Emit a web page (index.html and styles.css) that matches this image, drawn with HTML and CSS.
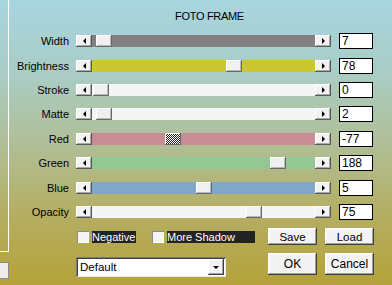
FILE: index.html
```html
<!DOCTYPE html>
<html>
<head>
  <title>Foto Frame</title>
  <link rel="stylesheet" href="styles.css">
</head>
<body>
  <div class="window">
    <div class="side">
      <div class="side-panel"></div>
      <div class="side-button"></div>
    </div>

    <div class="main">
      <h1 class="title">FOTO FRAME</h1>

      <div class="sliders">
        <span class="label">Width</span>
        <div class="slider">
          <span class="arrow"><i class="tri-left"></i></span>
          <span class="track track-gray"><span class="thumb" style="left: 4px"></span></span>
          <span class="arrow"><i class="tri-right"></i></span>
        </div>
        <span class="value">7</span>

        <span class="label">Brightness</span>
        <div class="slider">
          <span class="arrow"><i class="tri-left"></i></span>
          <span class="track track-yellow"><span class="thumb" style="left: 134px"></span></span>
          <span class="arrow"><i class="tri-right"></i></span>
        </div>
        <span class="value">78</span>

        <span class="label">Stroke</span>
        <div class="slider">
          <span class="arrow"><i class="tri-left"></i></span>
          <span class="track track-white"><span class="thumb" style="left: 1px"></span></span>
          <span class="arrow"><i class="tri-right"></i></span>
        </div>
        <span class="value">0</span>

        <span class="label">Matte</span>
        <div class="slider">
          <span class="arrow"><i class="tri-left"></i></span>
          <span class="track track-white"><span class="thumb" style="left: 4px"></span></span>
          <span class="arrow"><i class="tri-right"></i></span>
        </div>
        <span class="value">2</span>

        <span class="label">Red</span>
        <div class="slider">
          <span class="arrow"><i class="tri-left"></i></span>
          <span class="track track-red"><span class="thumb thumb-focus" style="left: 73px"></span></span>
          <span class="arrow"><i class="tri-right"></i></span>
        </div>
        <span class="value">-77</span>

        <span class="label">Green</span>
        <div class="slider">
          <span class="arrow"><i class="tri-left"></i></span>
          <span class="track track-green"><span class="thumb" style="left: 178px"></span></span>
          <span class="arrow"><i class="tri-right"></i></span>
        </div>
        <span class="value">188</span>

        <span class="label">Blue</span>
        <div class="slider">
          <span class="arrow"><i class="tri-left"></i></span>
          <span class="track track-blue"><span class="thumb" style="left: 104px"></span></span>
          <span class="arrow"><i class="tri-right"></i></span>
        </div>
        <span class="value">5</span>

        <span class="label">Opacity</span>
        <div class="slider">
          <span class="arrow"><i class="tri-left"></i></span>
          <span class="track track-white"><span class="thumb" style="left: 154px"></span></span>
          <span class="arrow"><i class="tri-right"></i></span>
        </div>
        <span class="value">75</span>
      </div>

      <div class="bottom">
        <div class="bottom-left">
          <div class="checks">
            <span class="check"></span>
            <span class="check-label negative">Negative</span>
            <span class="check"></span>
            <span class="check-label shadow">More Shadow</span>
          </div>
          <div class="select">
            <span class="select-text">Default</span>
            <span class="select-btn"><i class="tri-down"></i></span>
          </div>
        </div>
        <div class="bottom-right">
          <div class="btn-row">
            <button class="btn btn-small">Save</button>
            <button class="btn btn-small">Load</button>
          </div>
          <div class="btn-row">
            <button class="btn btn-big">OK</button>
            <button class="btn btn-big">Cancel</button>
          </div>
        </div>
      </div>
    </div>
  </div>
</body>
</html>
```

FILE: styles.css
```css
body {
  margin: 0;
  font-family: "Liberation Sans", Arial, sans-serif;
}

.window {
  width: 392px;
  height: 285px;
  display: flex;
  overflow: hidden;
  background: linear-gradient(to bottom, #a7d5e0 0%, #a9cdc6 25%, #b0bf98 50%, #b4ae62 75%, #b5a23a 100%);
}

.side {
  width: 9px;
  flex: none;
}

.side-panel {
  height: 252px;
  box-sizing: border-box;
  border-right: 1px solid #fff;
  border-bottom: 1px solid #fff;
}

.side-button {
  margin-top: 10px;
  height: 17px;
  box-sizing: border-box;
  background: #ececec;
  border: 1px solid #8a8a8a;
  border-left: none;
}

.main {
  flex: 1;
}

.title {
  margin: 0;
  height: 29px;
  box-sizing: border-box;
  padding: 10px 0 0 166px;
  font-size: 11px;
  line-height: 13px;
  font-weight: normal;
  letter-spacing: -0.3px;
  color: #000;
}

/* slider rows */
.sliders {
  display: grid;
  grid-template-columns: 60px 255px 35px;
  grid-auto-rows: 24.43px;
  column-gap: 7px;
  align-items: center;
}

.label {
  text-align: right;
  font-size: 11px;
  color: #000;
}

.slider {
  display: flex;
  height: 12px;
}

.arrow {
  width: 16px;
  flex: none;
  display: flex;
  align-items: center;
  justify-content: center;
  background: #f2f2f2;
  box-shadow: inset -1px -1px #5a5a5a, inset 1px 1px #fff, inset -2px -2px #a8a8a8;
}

.tri-left {
  width: 0;
  height: 0;
  border-right: 3px solid #000;
  border-top: 3px solid transparent;
  border-bottom: 3px solid transparent;
}

.tri-right {
  width: 0;
  height: 0;
  border-left: 3px solid #000;
  border-top: 3px solid transparent;
  border-bottom: 3px solid transparent;
}

.tri-down {
  width: 0;
  height: 0;
  border-top: 3px solid #000;
  border-left: 3px solid transparent;
  border-right: 3px solid transparent;
}

.track {
  flex: 1;
  position: relative;
}

.track-gray { background: #808080; }
.track-yellow { background: #c9c831; }
.track-white { background: #f5f5f5; }
.track-red { background: #c98c94; }
.track-green { background: #93c793; }
.track-blue { background: #80a7c8; }

.thumb {
  position: absolute;
  top: 0;
  width: 16px;
  height: 12px;
  box-sizing: border-box;
  background: #f0f0f0;
  box-shadow: inset -1px -1px #6a6a6a, inset 1px 1px #fff, inset -2px -2px #b8b8b8;
}

.thumb-focus {
  background: repeating-conic-gradient(#222 0 25%, #fff 0 50%) 0 0 / 2px 2px;
  box-shadow: inset -1px -1px #6a6a6a, inset 1px 1px #fff;
}

.value {
  margin-left: 1px;
  height: 16px;
  box-sizing: border-box;
  border: 1px solid #000;
  background: #fff;
  padding-left: 2px;
  font-size: 12px;
  line-height: 14px;
  color: #000;
}

/* bottom area */
.bottom {
  display: flex;
  margin-top: 4px;
  padding-left: 67px;
}

.bottom-left {
  width: 192px;
}

.checks {
  display: flex;
  align-items: center;
  margin-top: 2px;
  height: 13px;
}

.check {
  width: 12px;
  height: 12px;
  margin-left: 1px;
  box-sizing: border-box;
  background: #f4f4f4;
  box-shadow: inset 1px 1px #8a8a8a, inset -1px -1px #fff;
}

.check-label {
  height: 12px;
  margin-left: 3px;
  background: #232323;
  color: #fff;
  font-size: 11px;
  line-height: 12px;
  white-space: nowrap;
}

.negative {
  width: 44px;
  margin-right: 15px;
}

.shadow {
  width: 88px;
}

.select {
  display: flex;
  align-items: center;
  margin-top: 14px;
  width: 150px;
  height: 20px;
  box-sizing: border-box;
  background: #fff;
  box-shadow: inset 1px 1px #7a7a7a, inset -1px -1px #e8e8e8, inset 2px 2px #404040;
}

.select-text {
  flex: 1;
  padding-left: 4px;
  font-size: 11.5px;
  color: #000;
}

.select-btn {
  width: 16px;
  height: 16px;
  margin-right: 2px;
  display: flex;
  align-items: center;
  justify-content: center;
  background: #f2f2f2;
  box-shadow: inset -1px -1px #404040, inset 1px 1px #fff, inset -2px -2px #a0a0a0;
}

.bottom-right {
  display: flex;
  flex-direction: column;
  gap: 8px;
}

.btn-row {
  display: flex;
  gap: 8px;
}

.btn {
  width: 49px;
  padding: 0;
  border: none;
  background: #f3f3f3;
  font-family: "Liberation Sans", Arial, sans-serif;
  color: #000;
  box-shadow: inset -1px -1px #404040, inset 1px 1px #fff, inset -2px -2px #a0a0a0, inset 2px 2px #f8f8f8;
}

.btn-small {
  height: 17px;
  font-size: 11.5px;
}

.btn-big {
  height: 22px;
  font-size: 12px;
}
```
